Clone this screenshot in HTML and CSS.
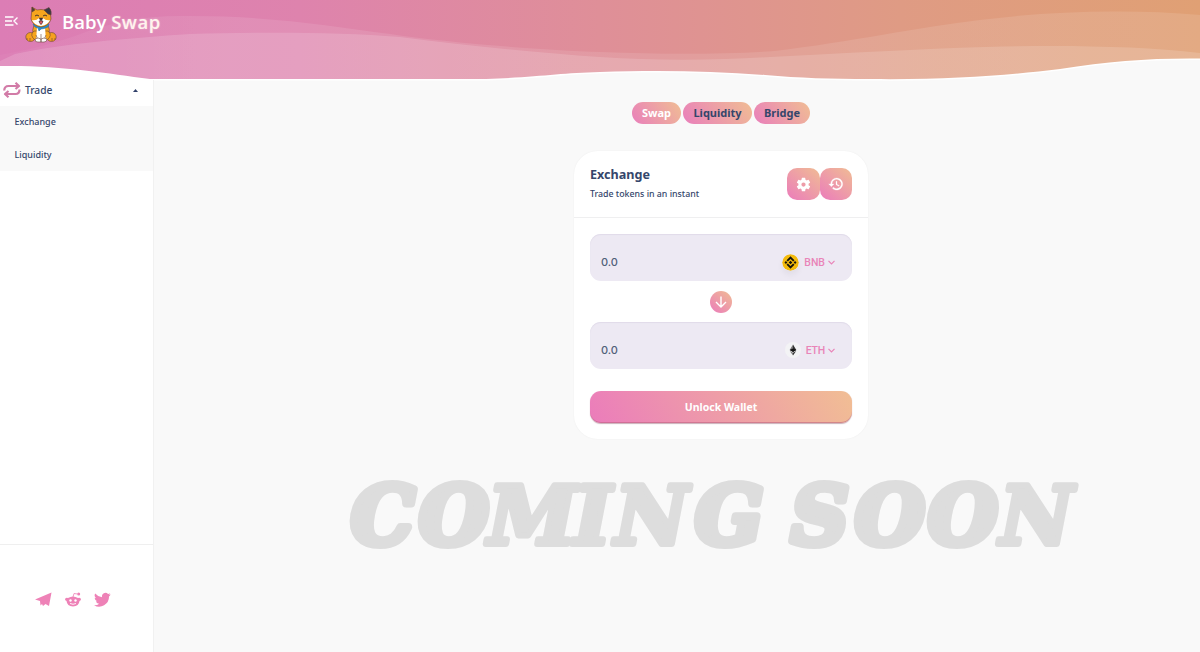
FILE: index.html
```html
<!DOCTYPE html>
<html lang="en">
<head>
<meta charset="utf-8">
<title>Baby Swap</title>
<link rel="stylesheet" href="styles.css">
</head>
<body>
<div class="app">
  <header class="header">
    <svg class="waves" width="1200" height="84" viewBox="0 0 1200 84" aria-hidden="true">
      <defs>
        <linearGradient id="sky"><stop offset="0" stop-color="#dc7db5"/><stop offset=".25" stop-color="#de83ad"/><stop offset=".5" stop-color="#df8f98"/><stop offset=".75" stop-color="#df9b84"/><stop offset="1" stop-color="#e0a074"/></linearGradient>
        <linearGradient id="veil"><stop offset="0" stop-color="#fff" stop-opacity=".03"/><stop offset=".2" stop-color="#fff" stop-opacity=".1"/><stop offset="1" stop-color="#fff" stop-opacity=".11"/></linearGradient>
      </defs>
      <path fill="url(#sky)" d="M0 0H1200V84H0Z"/>
      <path fill="url(#veil)" d="M0 55C30 50 50 44 75 36C110 22 145 15 190 16C270 16 330 26 390 34C450 43 540 50 600 52C670 55 730 54 775 51C850 42 920 27 980 20C1050 11 1130 9 1200 15V84H0Z"/>
      <path fill="#fff" fill-opacity=".15" d="M0 61L15 54C60 44 130 38 190 34C260 32 340 32 400 37C470 46 540 53 600 57C660 61 720 60 770 57C850 53 920 49 985 47C1060 45 1140 46 1200 53V84H0Z"/>
      <path fill="#fff" d="M0 66C60 65 105 73 150 79H486C540 77 560 73 600 72C660 70 710 71 765 75C800 78 830 79 870 79C950 80 1010 75 1060 69C1110 61 1150 58 1200 58.500V84H0Z"/>
      <path fill="#f9f9f9" d="M154 80.500H488C540 78.500 560 74.500 600 73.500C660 71.500 710 72.500 765 76.500C800 79.500 830 80.500 870 80.500C950 81.500 1010 76.500 1060 70.500C1110 62.500 1150 59.500 1200 60V84H154Z"/>
    </svg>
    <div class="brand">
      <svg class="menu" width="13" height="10" viewBox="0 0 13 10" fill="none" stroke="#fff" stroke-width="1.400"><path d="M0 1H8.500M0 5H7M0 9H8.500M12.500 1.500L9 5L12.500 8.500"/></svg>
      <svg class="dog" width="32" height="37" viewBox="0 0 32 37" stroke="#694337" stroke-width=".6" stroke-linejoin="round">
        <path fill="#f6a51d" d="M9 19Q7 24 8 29L24 29Q25 23 23 19Z"/>
        <ellipse cx="5.500" cy="31" rx="4.700" ry="4.500" fill="#f5a021"/><ellipse cx="26.500" cy="31" rx="4.700" ry="4.500" fill="#f5a021"/>
        <path fill="#f6a51d" d="M9 25Q4 29 10 34L22 34Q28 29 23 25Z"/>
        <path fill="#fff" stroke="none" d="M12 21H20L21 35H11Z"/>
        <path d="M16 28V35M11 29L13 34M21 29L19 34" fill="none"/>
        <path fill="#fff" d="M10 33Q10 36.500 13 36H16V33Q13 31 10 33ZM16 33V36H19Q22 36 22 33Q19 31 16 33Z"/>
        <path fill="#278dcc" stroke="#2874a8" d="M8 18Q16 22 24 18L23 21Q19 23 16 23L14 25L13 22L10 21Z"/>
        <path fill="#f6a51d" d="M7 1L12 4Q16 3 20 4L25 3L26 13Q24 20 16 21Q8 20 6 13Z"/>
        <path fill="#383947" d="M19 4L24 1.500Q27 5 26 9L23 8Z"/><path fill="#4b3d3c" d="M7 1L10 4L7 6Z"/>
        <path fill="#fff" stroke="none" d="M7 14Q11 15 14 12H18Q21 15 25 14Q23 19 16 20Q9 19 7 14Z"/>
        <path fill="none" stroke="#352a2c" stroke-width=".9" d="M10 10L12 9L14 10M18 10L20 9L22 10"/>
        <path fill="#26242a" d="M14 12H18L16 15Z"/><path fill="#e85e65" stroke="#26242a" d="M14 15H18Q17 18.500 16 18.500Q15 18.500 14 15Z"/>
        <path d="M2 32V34M5 32V35M27 32V35M30 32V34" fill="none"/>
      </svg>
      <span class="name">Baby <b>Swap</b></span>
    </div>
  </header>
  <div class="body">
    <aside class="side">
      <div class="trade">
        <svg width="18" height="16" viewBox="0 0 18 16" fill="none" stroke="#d27ba7" stroke-width="2.200" stroke-linejoin="round"><path d="M1.200 8.500Q1.500 4 5.500 4H15.500M12.500 .8L16 4L12.500 7"/><path d="M16.500 7.500Q16.500 12 12.500 12H2.500M5.500 9L2 12L5.500 15.200"/></svg>
        <span>Trade</span>
        <svg class="caret" width="5" height="3" viewBox="0 0 5 3"><path d="M0 3L2.500 0L5 3Z" fill="#31416a"/></svg>
      </div>
      <nav class="sub"><a>Exchange</a><a>Liquidity</a></nav>
      <div class="social">
        <svg width="17" height="15" viewBox="0 0 17 15"><path fill="#ee82b7" d="M0 7.500L16.500 .5L14 14L10.500 12L8 14L7 12L5.500 13.500L5 9Z"/></svg>
        <svg width="16" height="15" viewBox="0 0 16 15"><path d="M8 5L9 1.500L12.500 2" fill="none" stroke="#ee82b7" stroke-width=".8"/><circle cx="13.700" cy="2" r="1.500" fill="#ee82b7"/><path fill="#ee82b7" d="M3 6Q8 3 13 6Q16 5 16 8L14.500 9Q14 14 8 14.500Q2 14 1.500 9L0 8Q0 5 3 6Z"/><circle cx="5.500" cy="8.500" r="1.200" fill="#fff"/><circle cx="10.500" cy="8.500" r="1.200" fill="#fff"/><path d="M5 11.500Q8 13 11 11.500" fill="none" stroke="#fff" stroke-width=".9"/></svg>
        <svg width="17" height="15" viewBox="0 0 24 21"><path fill="#ee82b7" d="M23.600 3.300a9 9 0 0 1-2.800.8 5 5 0 0 0 2.100-2.600c-1 .6-2 1-3.100 1.200a4.900 4.900 0 0 0-8.400 4.500A14 14 0 0 1 1.700 2a5 5 0 0 0 1.500 6.600c-.8 0-1.600-.2-2.200-.6 0 2.400 1.700 4.400 3.900 4.900-.7.200-1.500.2-2.200.1.600 1.900 2.400 3.300 4.600 3.400A10 10 0 0 1 0 18.500 14 14 0 0 0 21.200 6.100c1-.8 1.800-1.700 2.400-2.800Z"/></svg>
      </div>
    </aside>
    <main class="main">
      <div class="tabs"><a class="tab on">Swap</a><a class="tab liq">Liquidity</a><a class="tab bridge">Bridge</a></div>
      <section class="card">
        <div class="head">
          <div class="titles"><h1>Exchange</h1><p>Trade tokens in an instant</p></div>
          <div class="tools">
            <span class="tool"><svg width="17" height="17" viewBox="0 0 24 24"><path fill="#fff" d="M19.140 12.940c.04-.3.060-.61.060-.94s-.02-.64-.07-.94l2.030-1.580a.49.490 0 0 0 .12-.61l-1.920-3.320a.49.490 0 0 0-.59-.22l-2.390.96a7 7 0 0 0-1.620-.94l-.36-2.540a.48.480 0 0 0-.48-.41h-3.840a.48.480 0 0 0-.47.410l-.36 2.540c-.59.240-1.130.57-1.620.94l-2.390-.96a.49.490 0 0 0-.59.220L2.740 8.870a.48.480 0 0 0 .12.610l2.030 1.580c-.05.300-.09.630-.09.940s.02.640.07.940l-2.030 1.580a.49.490 0 0 0-.12.610l1.920 3.320c.12.220.37.290.59.220l2.390-.96c.5.380 1.030.7 1.620.94l.36 2.540c.05.240.24.410.48.410h3.840c.24 0 .44-.17.470-.41l.36-2.540a7 7 0 0 0 1.620-.94l2.390.96c.22.080.47 0 .59-.22l1.920-3.320a.48.480 0 0 0-.12-.61ZM12 15a3 3 0 1 1 0-6 3 3 0 0 1 0 6Z"/></svg></span>
            <span class="tool"><svg width="16" height="16" viewBox="0 0 24 24"><path fill="#fff" stroke="#fff" stroke-width=".4" d="M13 3a9 9 0 0 0-9 9H1l3.890 3.890.07.140L9 12H6a7 7 0 1 1 2.060 4.940l-1.420 1.420A9 9 0 1 0 13 3Zm-1 5v5l4.280 2.540.72-1.210-3.500-2.080V8H12Z"/></svg></span>
          </div>
        </div>
        <div class="form">
          <div class="field"><span class="amount">0.0</span><span class="coin">
            <svg class="bnb" width="17" height="17" viewBox="0 0 17 17"><circle cx="8.500" cy="8.500" r="8.300" fill="#f3ba0b"/><path fill="none" stroke="#17140b" stroke-width="1.900" d="M5.200 6.900L8.500 3.600L11.800 6.900M5.200 10.100L8.500 13.400L11.800 10.100"/><path fill="#17140b" d="M8.500 6.700L10.300 8.500L8.500 10.300L6.700 8.500ZM3.900 7.100L5.300 8.500L3.900 9.900L2.500 8.500ZM13.100 7.100L14.500 8.500L13.100 9.900L11.700 8.500Z"/></svg>
            <span>BNB</span><svg width="7" height="5" viewBox="0 0 7 5" fill="none" stroke="#e984b8" stroke-width="1.200"><path d="M.5.800L3.500 3.800L6.500.8"/></svg></span></div>
          <span class="flip"><svg width="12" height="12" viewBox="0 0 12 12" fill="none" stroke="#fff" stroke-width="1.400"><path d="M6 .5V10.500M1 6L6 11L11 6"/></svg></span>
          <div class="field"><span class="amount">0.0</span><span class="coin">
            <svg class="eth" width="16" height="16" viewBox="0 0 16 16"><circle cx="8" cy="8" r="8" fill="#f3f3f5"/><path fill="#343434" d="M8 2.500L11.300 8L8 10ZM8 10.800L11.200 9L8 13.500Z"/><path fill="#777" d="M8 2.500L4.700 8L8 10ZM8 10.800L4.800 9L8 13.500Z"/><path fill="#141414" d="M8 6.500L11.300 8L8 10L4.700 8Z"/></svg>
            <span class="sym">ETH</span><svg width="7" height="5" viewBox="0 0 7 5" fill="none" stroke="#e984b8" stroke-width="1.200"><path d="M.5.800L3.500 3.800L6.500.8"/></svg></span></div>
          <button class="unlock">Unlock Wallet</button>
        </div>
      </section>
      <svg class="soon" width="740" height="110" viewBox="344 459 740 110"><text y="543" x="351 419 488 574 615 695 765 791 855 928 1000">CO<tspan class="slim">MIN</tspan>G SOO<tspan class="slim">N</tspan></text></svg>
    </main>
  </div>
</div>
</body>
</html>
```
FILE: styles.css
```css
* { box-sizing: border-box; }
body { margin: 0; background: #f9f9f9; font-family: "Noto Sans", sans-serif; color: #35466b; }
.app { height: 652px; overflow: hidden; display: flex; flex-direction: column; }
.header { height: 80px; flex: none; position: relative; }
.waves { position: absolute; left: 0; top: 0; display: block; }
.brand { position: relative; display: flex; align-items: flex-start; }
.menu { margin: 16px 0 0 5px; }
.dog { margin: 6px 0 0 7px; }
.name { margin: 9px 0 0 5px; font: 600 18.5px/26px "Open Sans", sans-serif; color: #fff; white-space: nowrap; }
.name b { font-weight: 600; letter-spacing: .5px; color: #fff3ed; text-shadow: 0 0 2px #fff6; }
.body { flex: 1; display: flex; min-height: 0; }
.side { position: relative; width: 154px; flex: none; background: #fff; border-right: 1px solid #f1f1f1; display: flex; flex-direction: column; }
.trade { height: 26px; padding: 0 15px 6px 3px; display: flex; align-items: center; font-size: 10.2px; font-weight: 500; }
.trade span { margin-left: 4px; }
.caret { margin-left: auto; }
.sub { height: 65px; background: #f9f9f9; padding-left: 14.5px; display: flex; flex-direction: column; font-size: 9px; font-weight: 500; line-height: 32.5px; }
.social { margin-top: auto; height: 108px; border-top: 1px solid #efefef; padding: 47px 0 0 35px; display: flex; gap: 13px; }
.main { flex: 1; display: flex; flex-direction: column; align-items: center; padding: 22px 0 0; }
.tabs { display: flex; gap: 2px; }
.tab { height: 22px; width: 49px; border-radius: 11px; background: linear-gradient(55deg, #e97fbb, #f0bd94); font-size: 11px; line-height: 22px; font-weight: 700; text-align: center; }
.on { color: #fff; }
.liq { width: 69px; }
.bridge { width: 56px; }
.tabs, .card { transform: translateX(44px); }
.card { width: 294px; height: 288px; margin-top: 27px; background: #fff; border-radius: 24px; box-shadow: 0 0 2px #0000000d; }
.head { height: 67px; border-bottom: 1.500px solid #efeff0; padding: 15px 16px 0; display: flex; justify-content: space-between; }
.titles h1 { margin: 0; font-size: 12.6px; line-height: 17px; font-weight: 700; }
.titles p { margin: 5px 0 0; font-size: 8.8px; line-height: 12px; font-weight: 500; }
.tools { display: flex; padding-top: 2px; }
.tool { width: 32.500px; height: 32px; border-radius: 10px; background: linear-gradient(40deg, #eb7cbb, #f0bc94); display: flex; align-items: center; justify-content: center; }
.form { padding: 16px; display: flex; flex-direction: column; align-items: center; }
.field { width: 100%; height: 47px; border-radius: 11px; background: #ede9f3; box-shadow: inset 0 1px 1px #e0dbe9; padding: 9px 17px 0 11px; display: flex; justify-content: space-between; align-items: center; }
.amount { font: 500 11px/16px Inter, sans-serif; color: #506079; }
.coin { display: flex; align-items: center; font: 500 10.5px/16px Roboto, sans-serif; color: #e984b8; }
.coin span { margin: 1px 3px 0 5px; }
.coin .sym { letter-spacing: -.2px; }
.bnb { border-radius: 50%; box-shadow: 0 4px 6px #0000000d; }
.flip { width: 22px; height: 22px; margin: 10px 0 9px; border-radius: 50%; background: linear-gradient(40deg, #eb7cbb, #f0bc94); display: flex; align-items: center; justify-content: center; }
.unlock { width: 100%; height: 32px; margin-top: 22px; padding: 0; border: 0; border-radius: 11px; background: linear-gradient(60deg, #eb7cbb, #f1be94); box-shadow: inset 0 -1px 0 #b75e7b88, 0 1px 1px #9b6b7b88; color: #fff; font: 700 10.5px/32px "Noto Sans", sans-serif; }
.soon { flex: none; margin-top: 21px; transform: translateX(37px); overflow: visible; }
.soon text { font: italic 700 80px "DejaVu Serif", serif; fill: #ddd; stroke: #ddd; stroke-width: 8px; stroke-linejoin: round; }
.soon .slim { stroke-width: 6px; }
```
